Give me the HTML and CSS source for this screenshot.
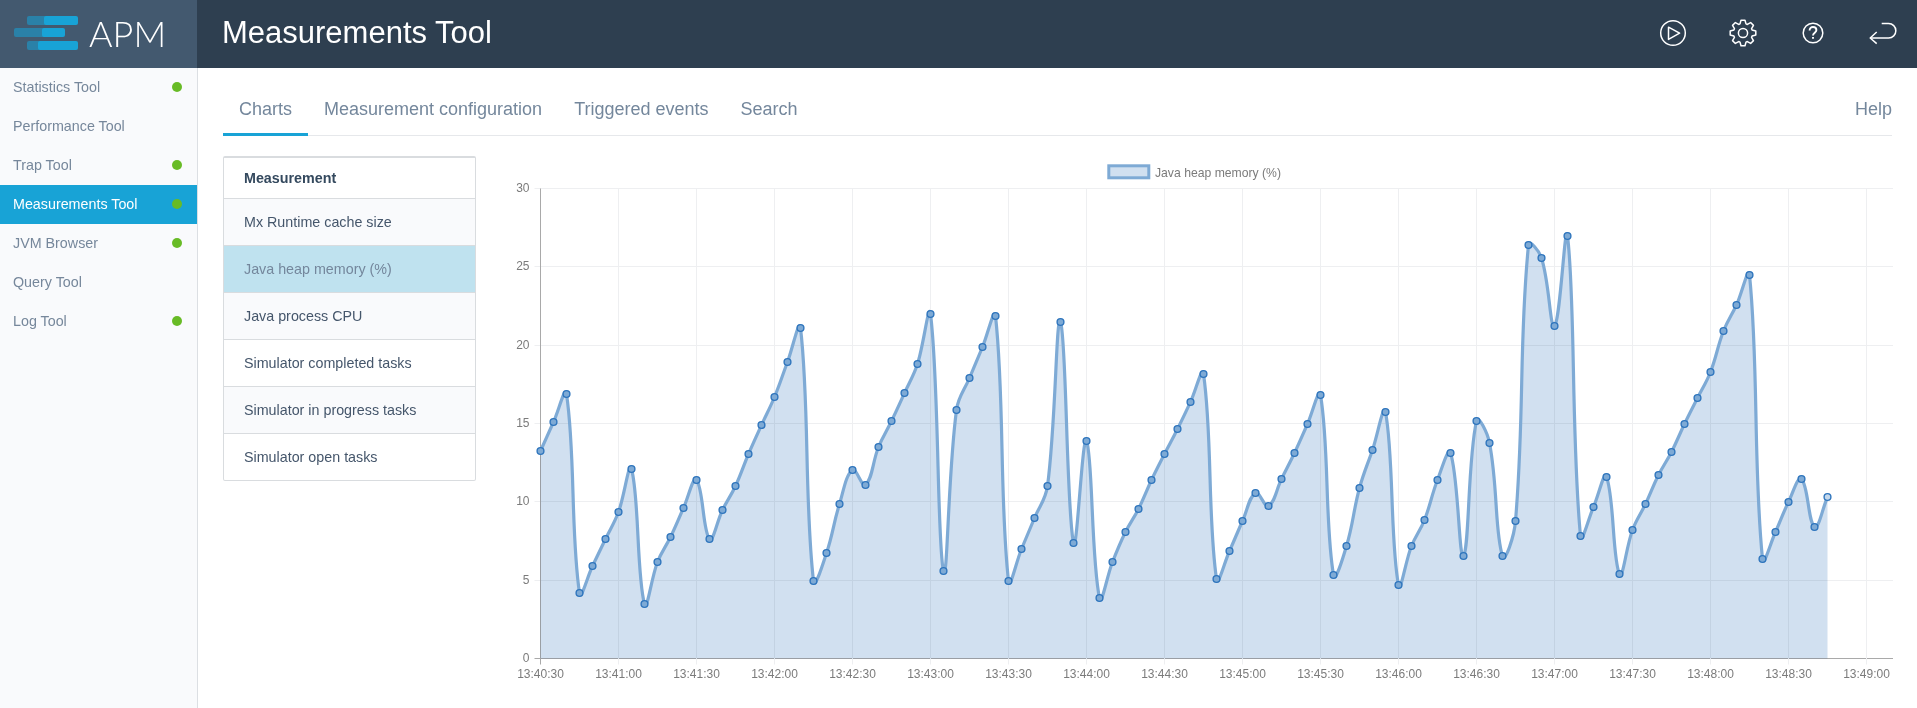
FILE: index.html
```html
<!DOCTYPE html>
<html lang="en">
<head>
    <meta charset="UTF-8">
    <title>Measurements Tool</title>
    <link rel="stylesheet" href="styles.css">
</head>
<body>
    <header class="topbar">
        <div class="brand">
            <svg class="brand-mark" width="64" height="34" viewBox="0 0 64 34">
                <rect x="13" y="0" width="20" height="9" rx="2" fill="#2a81a8"/>
                <rect x="30" y="0" width="34" height="9" rx="2" fill="#18a3d6"/>
                <rect x="0" y="12" width="32" height="9" rx="2" fill="#2a81a8"/>
                <rect x="28" y="12" width="23" height="9" rx="2" fill="#18a3d6"/>
                <rect x="13" y="25" width="14" height="9" rx="2" fill="#2a81a8"/>
                <rect x="24" y="25" width="40" height="9" rx="2" fill="#18a3d6"/>
            </svg>
            <span class="brand-name">APM</span>
        </div>
        <h1 class="page-title">Measurements Tool</h1>
        <div class="top-icons">
            <svg class="icon" width="28" height="28" viewBox="0 0 28 28">
                <circle cx="14" cy="14" r="12.3"/>
                <path d="M9.5 8.2 L20.6 14.2 L9.5 20.4 Z"/>
            </svg>
            <svg class="icon" width="28" height="28" viewBox="0 0 28 28">
                <circle cx="14" cy="14" r="4.6"/>
                <polygon points="11,4.9 12,1.2 16,1.2 17,4.9 18.31,5.44 21.64,3.54 24.46,6.36 22.56,9.69 23.1,11 26.8,12 26.8,16 23.1,17 22.56,18.31 24.46,21.64 21.64,24.46 18.31,22.56 17,23.1 16,26.8 12,26.8 11,23.1 9.69,22.56 6.36,24.46 3.54,21.64 5.44,18.31 4.9,17 1.2,16 1.2,12 4.9,11 5.44,9.69 3.54,6.36 6.36,3.54 9.69,5.44"/>
            </svg>
            <svg class="icon" width="28" height="28" viewBox="0 0 28 28">
                <circle cx="14" cy="14" r="9.8"/>
                <path class="icon-heavy" d="M10.6 11.4c0-2.1 1.5-3.4 3.4-3.4s3.4 1.3 3.4 3.1c0 2.6-3.4 2.7-3.4 5.4"/>
                <path class="icon-heavy" d="M14 18v1.8"/>
            </svg>
            <svg class="icon" width="28" height="24" viewBox="0 0 28 24">
                <path d="M12.7 2.5H19.6a7.25 7.25 0 0 1 0 14.5H1.5"/>
                <path d="M7.7 11 L1.2 17 L7.7 22.6"/>
            </svg>
        </div>
    </header>

    <div class="layout">
        <nav class="sidebar">
            <a class="nav-item">Statistics Tool<span class="dot"></span></a>
            <a class="nav-item">Performance Tool</a>
            <a class="nav-item">Trap Tool<span class="dot"></span></a>
            <a class="nav-item active">Measurements Tool<span class="dot"></span></a>
            <a class="nav-item">JVM Browser<span class="dot"></span></a>
            <a class="nav-item">Query Tool</a>
            <a class="nav-item">Log Tool<span class="dot"></span></a>
        </nav>

        <main class="content">
            <div class="tabs">
                <a class="tab active">Charts</a>
                <a class="tab">Measurement configuration</a>
                <a class="tab">Triggered events</a>
                <a class="tab">Search</a>
                <a class="tab tab-help">Help</a>
            </div>

            <div class="panel">
                <div class="measure-list">
                    <div class="measure-row measure-head">Measurement</div>
                    <div class="measure-row odd">Mx Runtime cache size</div>
                    <div class="measure-row selected">Java heap memory (%)</div>
                    <div class="measure-row odd">Java process CPU</div>
                    <div class="measure-row">Simulator completed tasks</div>
                    <div class="measure-row odd">Simulator in progress tasks</div>
                    <div class="measure-row">Simulator open tasks</div>
                </div>
                <div id="chart" class="chart"></div>
            </div>
        </main>
    </div>
    <script src="chart.js"></script>
</body>
</html>
```

FILE: styles.css
```css
* {
    box-sizing: border-box;
}

html, body {
    height: 100%;
}

body {
    margin: 0;
    overflow: hidden;
    background-color: #FFFFFF;
    font-family: "Liberation Sans", Arial, sans-serif;
    color: #34495e;
}

.topbar {
    display: flex;
    align-items: center;
    height: 68px;
    background-color: #2e3f50;
}

.brand {
    display: flex;
    align-items: center;
    width: 197px;
    height: 100%;
    padding: 0 0 2px 14px;
    background-color: #43596f;
}

.brand-name {
    margin-left: 11px;
    font-family: Lato, "Liberation Sans", sans-serif;
    font-size: 36px;
    font-weight: 300;
    color: #FFFFFF;
}

.page-title {
    margin: 0 0 2px 25px;
    font-size: 31px;
    font-weight: 400;
    color: #FFFFFF;
}

.top-icons {
    display: flex;
    align-items: center;
    gap: 42px;
    margin-left: auto;
    padding: 0 20px 2px 0;
}

.icon {
    fill: none;
    stroke: #FFFFFF;
    stroke-width: 1.5;
    stroke-linejoin: round;
}

.icon-heavy {
    stroke-width: 1.9;
}

.layout {
    display: flex;
    height: 640px;
}

.sidebar {
    flex: none;
    width: 198px;
    border-right: 1px solid #dcdfe3;
    background-color: #f9fafc;
}

.nav-item {
    display: flex;
    align-items: center;
    justify-content: space-between;
    height: 39px;
    padding: 0 15px 1px 13px;
    font-size: 14.3px;
    color: #76879b;
}

.nav-item.active {
    background-color: #18a3d6;
    color: #FFFFFF;
}

.dot {
    width: 10px;
    height: 10px;
    border-radius: 50%;
    background-color: #68bb26;
}

.content {
    flex: 1;
    padding: 0 25px 0 25px;
}

.tabs {
    display: flex;
    height: 68px;
    margin-bottom: 20px;
    border-bottom: 1px solid #e6e8eb;
}

.tab {
    display: flex;
    align-items: center;
    height: 68px;
    padding: 18px 16px 0;
    border-bottom: 3px solid transparent;
    font-size: 18px;
    color: #74879c;
}

.tab.active {
    border-bottom-color: #18a3d6;
}

.tab-help {
    margin-left: auto;
    padding-right: 0;
}

.panel {
    display: flex;
}

.measure-list {
    flex: none;
    width: 253px;
    align-self: flex-start;
    border: 1px solid #d9dcdf;
    border-top-width: 2px;
    border-radius: 2px;
}

.measure-row {
    display: flex;
    align-items: center;
    height: 47px;
    padding-left: 20px;
    border-bottom: 1px solid #d9dcdf;
    font-size: 14.3px;
    color: #45566b;
}

.measure-row:last-child {
    height: 46px;
    border-bottom: none;
}

.measure-head {
    height: 41px;
    font-weight: 700;
    color: #34495e;
}

.odd {
    background-color: #f9fafc;
}

.selected {
    background-color: #bfe2ef;
    color: #74879c;
}

.chart {
    position: relative;
    flex: 1;
}

/* svg sits on the free canvas of the chart, page coordinates minus the panel origin */
.chart svg {
    position: absolute;
    top: -156px;
    left: -476px;
    overflow: visible;
}

.chart text {
    font-family: "Liberation Sans", Arial, sans-serif;
    font-size: 12px;
    fill: #7b7b7b;
}

.chart text.legend-label {
    font-size: 12.2px;
}

.grid-line {
    stroke: #eeeff1;
    stroke-width: 1;
}

.axis-line {
    stroke: #a9a9a9;
    stroke-width: 1;
}

.series-fill {
    fill: #d1e0f0;
    stroke: none;
    mix-blend-mode: multiply;
}

.series-line {
    fill: none;
    stroke: #7eaad5;
    stroke-width: 3.2;
}

.series-point {
    fill: #7eaad5;
    stroke: #2f75bd;
    stroke-width: 1.4;
}

.series-point.last {
    fill: #c4d8ec;
}

.legend-box {
    fill: #d1e0f0;
    stroke: #7eaad5;
    stroke-width: 3;
}
```

FILE: chart.js
```js
// Java heap memory samples, one every 5 seconds (y = pixel height in the plot)
var samples = [451, 422, 394, 593, 566, 539, 512, 469, 604, 562, 537, 508, 480, 539, 510, 486,
    454, 425, 397, 362, 328, 581, 553, 504, 470, 485, 447, 421, 393, 364, 314, 571, 410, 378,
    347, 316, 581, 549, 518, 486, 322, 543, 441, 598, 562, 532, 509, 480, 454, 429, 402, 374,
    579, 551, 521, 493, 506, 479, 453, 424, 395, 575, 546, 488, 450, 412, 585, 546, 520, 480,
    453, 556, 421, 443, 556, 521, 245, 258, 326, 236, 536, 507, 477, 574, 530, 504, 475, 452,
    424, 398, 372, 331, 305, 275, 559, 532, 502, 479, 527, 497];

var LEFT = 540.5, RIGHT = 1893, TOP = 188.5, BOTTOM = 658.5;
var STEP_X = 13, TICK_X = 78, TICK_Y = 78.33, TENSION = 0.4;

function dist(a, b) {
    return Math.sqrt((a.x - b.x) * (a.x - b.x) + (a.y - b.y) * (a.y - b.y));
}

var points = samples.map(function(y, i) {
    return { x: LEFT + i * STEP_X, y: y };
});

// same spline the chart library uses: control points scaled by neighbour distances
function curve() {
    var d = 'M' + points[0].x + ' ' + points[0].y;
    var ctrl = points.map(function(p, i) {
        var prev = points[i - 1] || p, next = points[i + 1] || p;
        var d01 = dist(prev, p), d12 = dist(p, next), sum = d01 + d12;
        var fa = TENSION * d01 / sum, fb = TENSION * d12 / sum;
        return {
            inX: p.x - fa * (next.x - prev.x), inY: p.y - fa * (next.y - prev.y),
            outX: p.x + fb * (next.x - prev.x), outY: p.y + fb * (next.y - prev.y)
        };
    });
    for (var i = 1; i < points.length; i++) {
        d += 'C' + ctrl[i - 1].outX.toFixed(1) + ' ' + ctrl[i - 1].outY.toFixed(1) + ' ' +
            ctrl[i].inX.toFixed(1) + ' ' + ctrl[i].inY.toFixed(1) + ' ' + points[i].x + ' ' + points[i].y;
    }
    return d;
}

function line(cls, x1, y1, x2, y2) {
    return '<line class="' + cls + '" x1="' + x1 + '" y1="' + y1 + '" x2="' + x2 + '" y2="' + y2 + '"/>';
}

function text(str, x, y, anchor, cls) {
    return '<text class="' + (cls || '') + '" x="' + x + '" y="' + y + '" text-anchor="' + anchor + '">' + str + '</text>';
}

function timeLabel(i) {
    var total = 13 * 3600 + 40 * 60 + 30 + i * 30;
    var m = Math.floor(total / 60) % 60, s = total % 60;
    return '13:' + m + ':' + (s < 10 ? '0' + s : s);
}

function draw() {
    var html = '<svg width="1917" height="708" viewBox="0 0 1917 708">';
    var i, x, y;

    for (i = 0; i <= 6; i++) {
        y = Math.round(BOTTOM - i * TICK_Y - 0.5) + 0.5;
        html += line(i === 0 ? 'axis-line' : 'grid-line', LEFT - 6, y, RIGHT, y);
        html += text(i * 5, LEFT - 11, y + 3, 'end');
    }
    for (i = 0; i <= 17; i++) {
        x = LEFT + i * TICK_X;
        html += line(i === 0 ? 'axis-line' : 'grid-line', x, TOP, x, BOTTOM + 6);
        html += text(timeLabel(i), x, BOTTOM + 19, 'middle');
    }

    var d = curve();
    var lastX = points[points.length - 1].x;
    html += '<path class="series-fill" d="' + d + 'L' + lastX + ' ' + BOTTOM + 'L' + LEFT + ' ' + BOTTOM + 'Z"/>';
    html += '<path class="series-line" d="' + d + '"/>';
    points.forEach(function(p, i) {
        var cls = i === points.length - 1 ? 'series-point last' : 'series-point';
        html += '<circle class="' + cls + '" cx="' + p.x + '" cy="' + p.y + '" r="3.4"/>';
    });

    html += '<rect class="legend-box" x="1108.8" y="165.8" width="40" height="12"/>';
    html += text('Java heap memory (%)', 1155, 177, 'start', 'legend-label');
    html += '</svg>';
    document.getElementById('chart').innerHTML = html;
}

draw();
```
